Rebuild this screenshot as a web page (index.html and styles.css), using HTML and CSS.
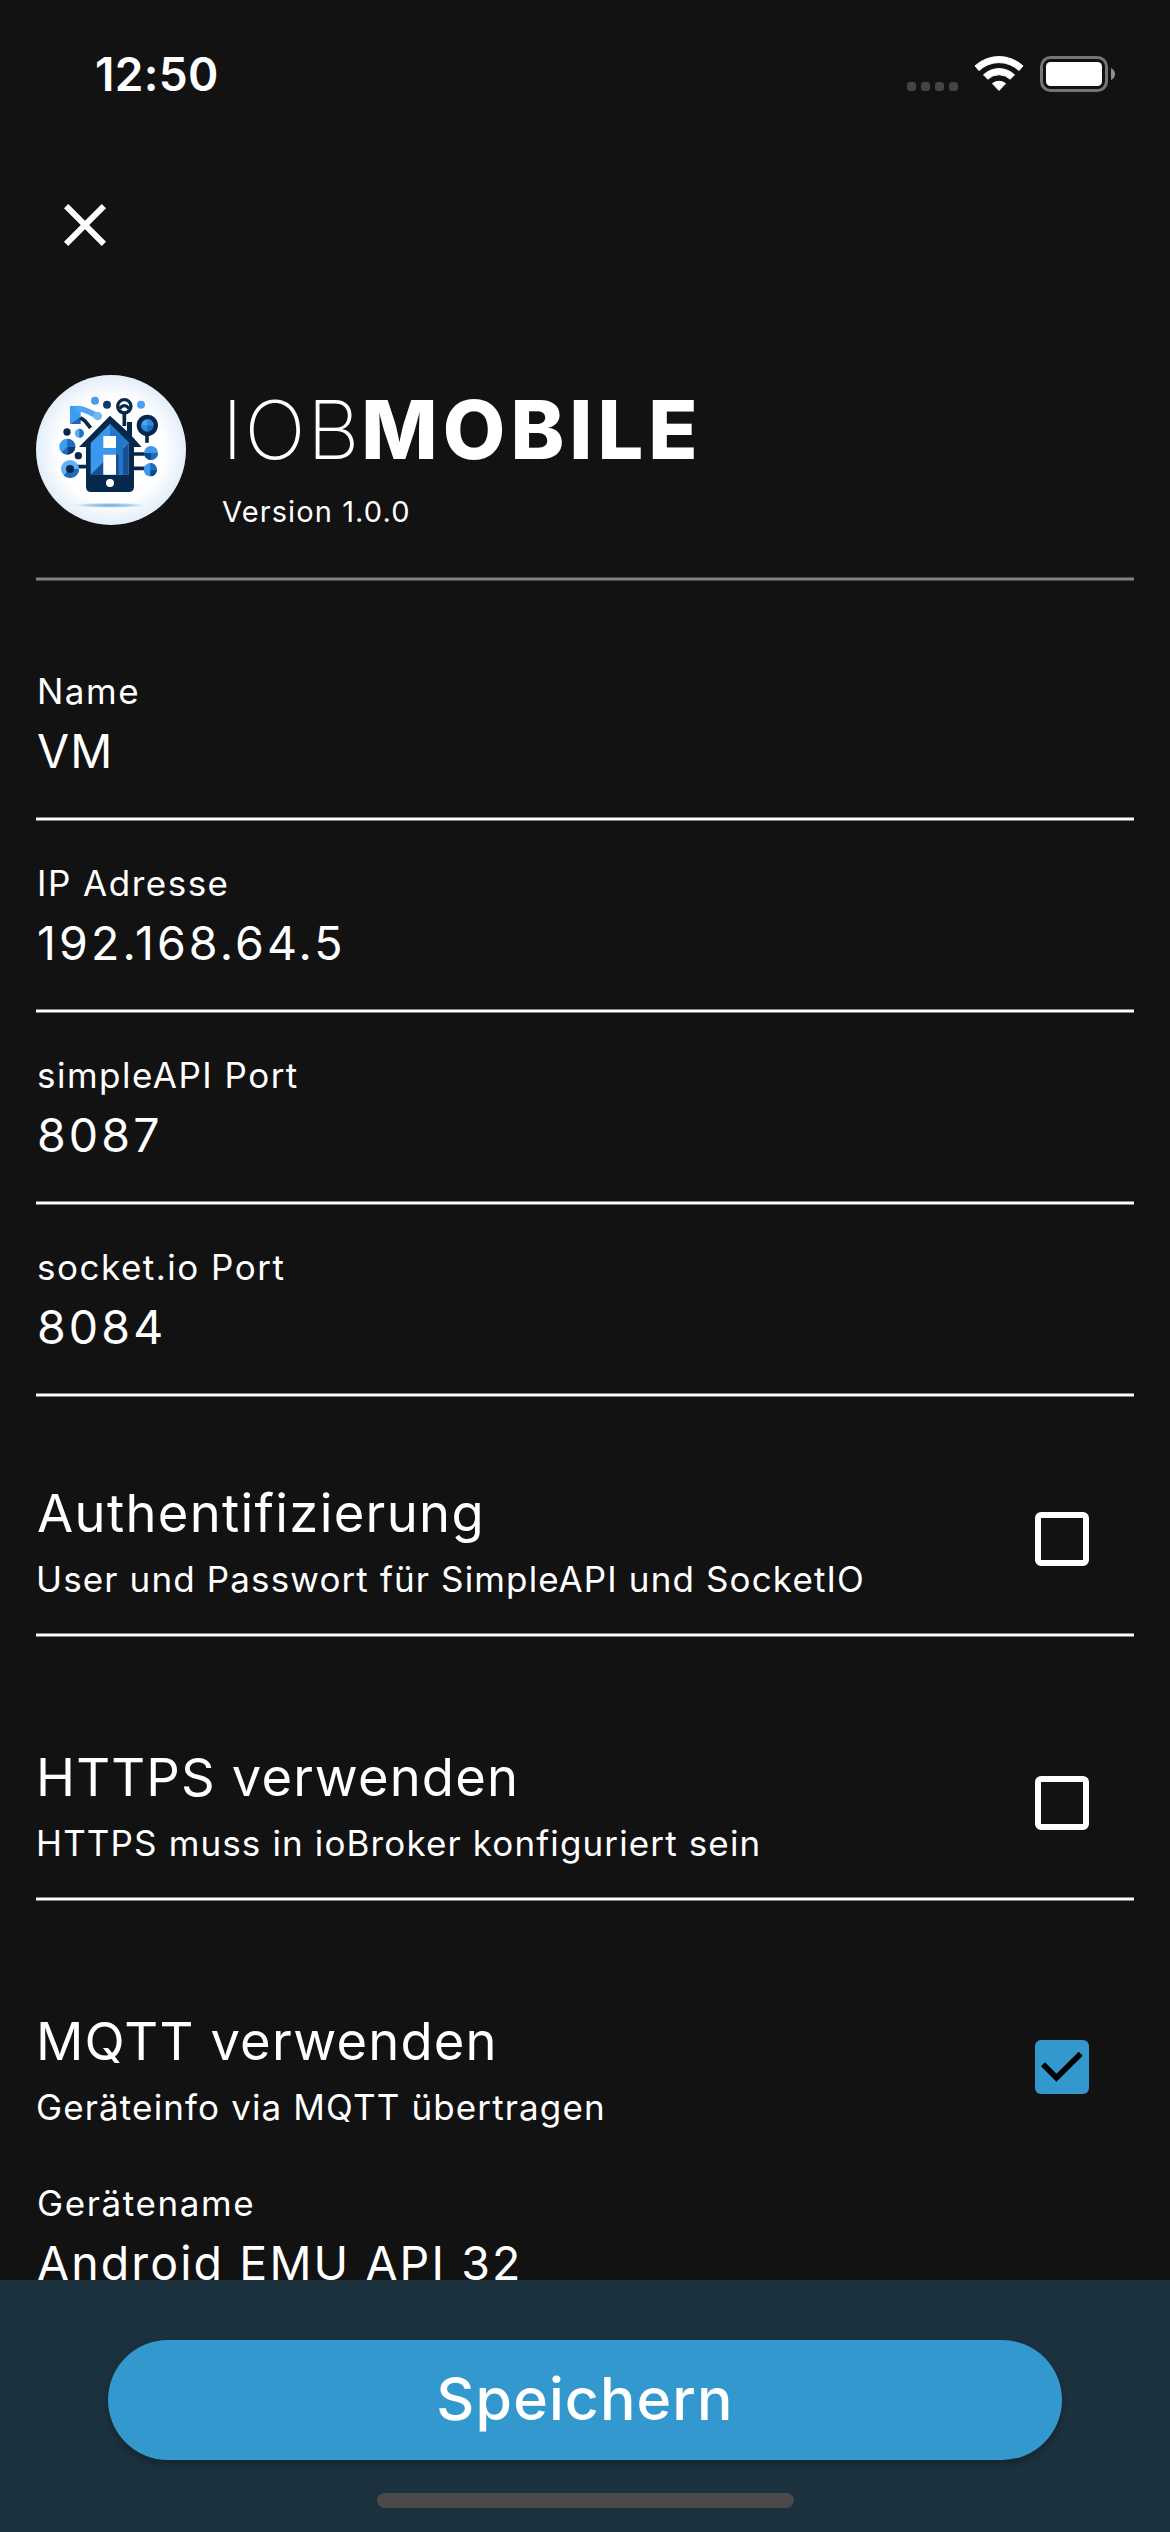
FILE: index.html
```html
<!DOCTYPE html>
<html lang="de">
<head>
<meta charset="utf-8">
<title>ioBMobile</title>
<link rel="stylesheet" href="styles.css">
</head>
<body>
<header class="status">
  <span class="clock">12:50</span>
  <svg class="status-icons" width="210" height="40" viewBox="907 53 210 40">
    <g fill="#444">
      <rect x="907" y="82" width="9" height="9" rx="3"/>
      <rect x="921" y="82" width="9" height="9" rx="3"/>
      <rect x="935" y="82" width="9" height="9" rx="3"/>
      <rect x="949" y="82" width="9" height="9" rx="3"/>
    </g>
    <g fill="#fff" stroke="#fff" stroke-width="1" stroke-linejoin="round">
      <path d="M975 65.9A35.4 35.4 0 0 1 1023 65.9L1019 70.6A29 29 0 0 0 979 70.6Z"/>
      <path d="M983.5 74.8A22.5 22.5 0 0 1 1014.500 74.800L1010.200 79.200A16.200 16.200 0 0 0 987.800 79.200Z"/>
      <path d="M992.400 83.600A10.500 10.500 0 0 1 1005.600 83.600L999 90.500Z"/>
    </g>
    <rect x="1041.500" y="57.500" width="65" height="33" rx="9" fill="none" stroke="#757575" stroke-width="3"/>
    <rect x="1046" y="62" width="56" height="24" rx="4.500" fill="#fff"/>
    <path d="M1111 68q4 2 4 6t-4 6z" fill="#8f8f8f"/>
  </svg>
</header>

<nav class="toolbar">
  <svg class="close" width="72" height="72" viewBox="0 0 24 24"><path fill="#fff" d="M19 6.410L17.590 5 12 10.590 6.410 5 5 6.410 10.590 12 5 17.590 6.410 19 12 13.410 17.590 19 19 17.590 13.410 12z"/></svg>
</nav>

<main class="content">
  <section class="brand">
    <svg class="logo" width="150" height="150" viewBox="30 27 450 450">
      <defs>
        <radialGradient id="disc"><stop offset=".7" stop-color="#fff"/><stop offset="1" stop-color="#e3eef9"/></radialGradient>
        <radialGradient id="glow"><stop offset="0" stop-color="#6ba5df"/><stop offset=".55" stop-color="#b9d4ef"/><stop offset="1" stop-color="#fff" stop-opacity="0"/></radialGradient>
      </defs>
      <circle cx="255" cy="252" r="225" fill="url(#disc)"/>
      <ellipse cx="250" cy="418" rx="130" ry="9" fill="url(#glow)"/>
      <!-- robot arm -->
      <path fill="#3d9cf3" d="M132 120h32v31l-32 23z"/>
      <path fill="#1c68ba" d="M132 174l32-23v23z"/>
      <path fill="none" stroke="#4ea6f5" stroke-width="17" d="M150 128c28-2 36 11 61 20"/>
      <circle cx="215" cy="150" r="13" fill="#74b7f5"/>
      <path fill="none" stroke="#06284b" stroke-width="11" d="M163 155l13 9 18 22"/>
      <!-- loose dots -->
      <circle cx="207" cy="104" r="12" fill="#4a9ae6"/>
      <circle cx="243" cy="116" r="12" fill="#0b3a6b"/>
      <circle cx="345" cy="116" r="12" fill="#4ba2f2"/>
      <circle cx="123" cy="198" r="11" fill="#06284b"/>
      <circle cx="157" cy="269" r="11" fill="#06284b"/>
      <circle cx="160" cy="202" r="13.500" fill="#5cacf1"/>
      <path fill="#1d72c6" d="M160 188.500a13.500 13.500 0 0 1 0 27z"/>
      <!-- connectors -->
      <path fill="none" stroke="#06284b" stroke-width="11" d="M295 140v40M363 200v30M315 264h50M315 307h50M150 302h40"/>
      <circle cx="295" cy="121" r="20" fill="#fff" stroke="#06284b" stroke-width="10"/>
      <path fill="none" stroke="#06284b" stroke-width="10" d="M281 127q14-16 28 0"/>
      <circle cx="364" cy="178" r="25" fill="#4aa3f3" stroke="#06284b" stroke-width="14"/>
      <path fill="#1c68ba" d="M364 178v19a19 19 0 0 0 19-19z"/>
      <path fill="#2f88dc" d="M364 178v-19a19 19 0 0 1 19 19zM364 178h-19a19 19 0 0 0 19 19z"/>
      <!-- nodes -->
      <circle cx="124" cy="242" r="24" fill="#3f9cf0"/>
      <path fill="#0b3a6b" d="M124 242h24a24 24 0 0 1-24 24z"/>
      <path fill="#1c6bbd" d="M124 242v-24a24 24 0 0 1 24 24zM124 242l-17 17a24 24 0 0 0 17 7z"/>
      <circle cx="132" cy="309" r="27" fill="#61aff4"/>
      <path fill="#1c6bbd" d="M132 309h27a27 27 0 0 1-46 19z"/>
      <circle cx="132" cy="309" r="12" fill="#06284b"/>
      <circle cx="375" cy="261" r="21" fill="#4098ea"/>
      <path fill="#0b4a88" d="M375 261h-21a21 21 0 0 0 21 21z"/>
      <path fill="#1c6bbd" d="M375 261h21a21 21 0 0 1-21 21z"/>
      <circle cx="373" cy="311" r="20" fill="#4098ea"/>
      <path fill="#0b4a88" d="M373 311v20a20 20 0 0 0 20-20z"/>
      <path fill="#1c6bbd" d="M373 311v-20a20 20 0 0 1 20 20z"/>
      <!-- house on a phone -->
      <path fill="#06284b" d="M252 149l51 47v-28h15v43l29 32h-23v119q0 16-16 16H196q-16 0-16-16V243h-21z"/>
      <path fill="#3b98ef" d="M252 174l57 56v96H194v-95z"/>
      <path fill="#2577c9" d="M252 174l57 56-16 12v84h-23V246h-1v-35h-17z"/>
      <path fill="#174f90" d="M194 326l38-38v38zM270 248h21l17-17v95h-17v-78zM270 266h8v60h-8z"/>
      <path fill="#fff" d="M232 210h38v36h-38zM232 266h38v60h-38z"/>
      <circle cx="252" cy="351" r="12" fill="#fff"/>
    </svg>
    <div class="brand-text">
      <h1 class="title"><span class="thin">IOB</span><span class="bold">MOBILE</span></h1>
      <p class="version">Version 1.0.0</p>
    </div>
  </section>

  <section class="fields">
    <div class="field"><label class="label">Name</label><div class="value ls-vm">VM</div></div>
    <div class="field"><label class="label">IP Adresse</label><div class="value">192.168.64.5</div></div>
    <div class="field"><label class="label">simpleAPI Port</label><div class="value">8087</div></div>
    <div class="field"><label class="label">socket.io Port</label><div class="value">8084</div></div>
  </section>

  <section class="options">
    <div class="option">
      <div class="option-row">
        <div><h2 class="option-title auth">Authentifizierung</h2><p class="option-sub">User und Passwort für SimpleAPI und SocketIO</p></div>
        <span class="checkbox"></span>
      </div>
    </div>
    <div class="option">
      <div class="option-row">
        <div><h2 class="option-title">HTTPS verwenden</h2><p class="option-sub">HTTPS muss in ioBroker konfiguriert sein</p></div>
        <span class="checkbox"></span>
      </div>
    </div>
    <div class="option open">
      <div class="option-row">
        <div><h2 class="option-title">MQTT verwenden</h2><p class="option-sub">Geräteinfo via MQTT übertragen</p></div>
        <span class="checkbox checked"><svg width="54" height="54" viewBox="0 0 54 54"><path fill="none" stroke="#000" stroke-width="5.700" d="M8 24.300L21.500 37.700 45.700 13.700"/></svg></span>
      </div>
      <div class="field"><label class="label device">Gerätename</label><div class="value text">Android EMU API 32</div></div>
    </div>
  </section>
</main>

<footer class="bottom">
  <button class="save">Speichern</button>
  <div class="home"></div>
</footer>
</body>
</html>
```
FILE: styles.css
```css
*, *::before, *::after { box-sizing: border-box; margin: 0; padding: 0; }

body {
  width: 1170px;
  height: 2532px;
  overflow: hidden;
  display: flex;
  flex-direction: column;
  background: #121212;
  color: #fff;
  font-family: Inter, "Liberation Sans", sans-serif;
  font-weight: 400;
}

.status {
  flex: none;
  height: 141px;
  display: flex;
  justify-content: space-between;
  align-items: flex-start;
  padding: 44px 53px 0 95px;
}
.clock { font-size: 46px; font-weight: 600; line-height: 60px; letter-spacing: 0.3px; }
.status-icons { margin-top: 9px; }

.toolbar {
  flex: none;
  height: 168px;
  display: flex;
  align-items: center;
  padding-left: 49px;
}

.content { flex: none; height: 1971px; overflow: hidden; padding: 0 36px; }

.brand {
  height: 272px;
  display: flex;
  flex-wrap: wrap;
  align-content: space-between;
  padding-top: 66px;
}
.brand-text { margin: 6px 0 0 36px; }
.title { font-size: 81px; line-height: 98px; font-weight: 200; white-space: nowrap; }
.thin { font-weight: 200; letter-spacing: 1.8px; }
.bold { font-weight: 800; letter-spacing: 5.04px; }
.version { margin-top: 15px; font-size: 29px; line-height: 36px; letter-spacing: 1.1px; }

.brand::after, .field::after, .option::after {
  content: "";
  display: block;
  width: 100%;
  height: 4px;
  background: #fff;
  border: solid #868686;
  border-width: 1px 0;
}
.brand::after { background: #828282; border-color: #4b4b4b; }

.fields { padding-top: 48px; }
.field { height: 192px; padding-top: 40px; }
.label { display: block; padding-left: 1px; font-size: 35px; line-height: 44px; letter-spacing: 1.5px; }
.label.device { letter-spacing: 1.6px; }
.value {
  height: 58px;
  margin: 9px 0 37px;
  padding-left: 1px;
  font-size: 46.5px;
  line-height: 58px;
  letter-spacing: 3.1px;
  white-space: nowrap;
}
.value.ls-vm { letter-spacing: 1.2px; }
.value.text { letter-spacing: 2.11px; }

.options { display: flex; flex-direction: column; gap: 24px; }
.option { height: 240px; padding-top: 84px; }
.option-row { height: 120px; margin-bottom: 32px; display: flex; justify-content: space-between; align-items: flex-start; }
.option-title { font-size: 52.5px; line-height: 64px; font-weight: 400; letter-spacing: 1.18px; }
.option-title.auth { padding-left: 1px; letter-spacing: 1.32px; }
.option-sub { margin-top: 12px; font-size: 35px; line-height: 44px; letter-spacing: 1.13px; }
.option.open { height: auto; }
.option.open::after { content: none; }
.option.open .option-row { margin-bottom: 12px; }

.checkbox { width: 54px; height: 54px; margin: 31px 45px 0 0; border: 6px solid #fff; border-radius: 6px; }
.checkbox.checked { border: 0; background: #3398ce; }
.checkbox svg { display: block; }

.bottom {
  flex: none;
  height: 252px;
  display: flex;
  flex-direction: column;
  align-items: center;
  padding-top: 60px;
  background: #1b313d;
}
.save {
  width: 954px;
  height: 120px;
  padding-bottom: 3px;
  border: 0;
  border-radius: 60px;
  background: #3398ce;
  box-shadow: 0 4px 6px rgba(0, 0, 0, 0.25);
  color: #fff;
  font: 500 59px/72px Inter, "Liberation Sans", sans-serif;
  letter-spacing: 1.1px;
}
.home { width: 417px; height: 15px; margin-top: 33px; border-radius: 7.5px; background: #4a4a4a; }
```
